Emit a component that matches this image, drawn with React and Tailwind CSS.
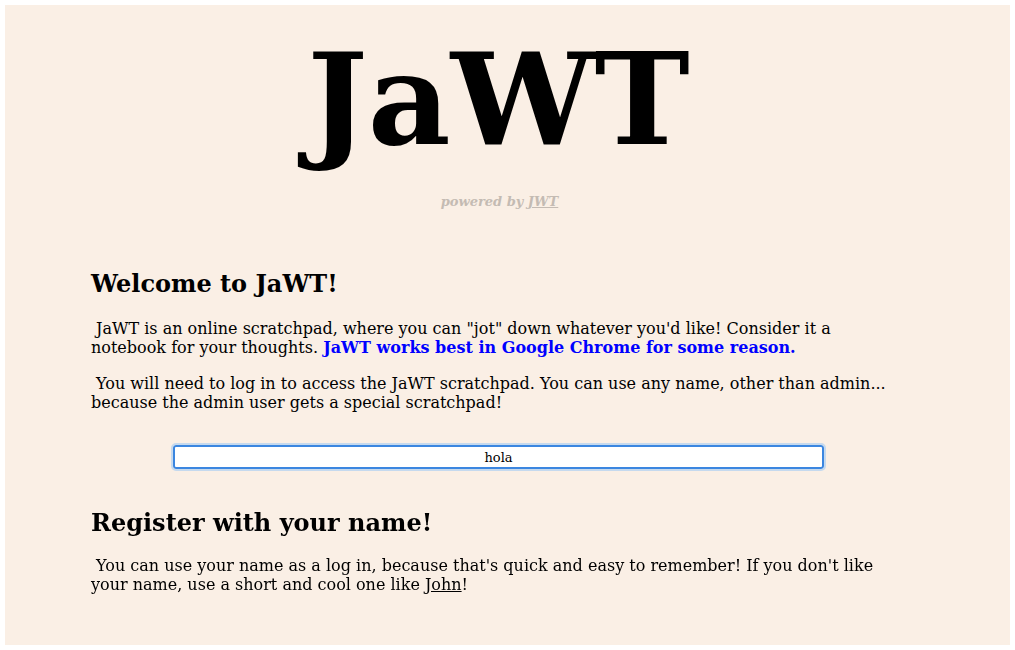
export default function App() {
  return (
    <div className="bg-white p-[5px] font-['DejaVu_Serif',serif] text-black">
      <div className="h-[640px] bg-[#faefe5] overflow-hidden">
        <div className="w-[1005px]">
          <h1 className="pt-[19px] pr-[18px] text-center text-[128px] font-bold leading-[normal]">JaWT</h1>
          <p className="mt-[20px] pr-[16px] text-center text-[13px] font-bold italic leading-[normal] text-[#c4bbb3]">
            powered by <span className="underline">JWT</span>
          </p>
          <div className="mt-[60px] ml-[86px] w-[804px]">
            <h2 className="text-[24px] font-bold leading-[normal]">Welcome to JaWT!</h2>
            <p className="mt-[21px] text-[16px] leading-[19px]">
              {'\u00a0'}JaWT is an online scratchpad, where you can "jot" down whatever you'd like! Consider it a notebook for your thoughts.{' '}
              <span className="font-bold text-[#0000ff]">JaWT works best in Google Chrome for some reason.</span>
            </p>
            <p className="mt-[17px] text-[16px] leading-[19px]">
              {'\u00a0'}You will need to log in to access the JaWT scratchpad. You can use any name, other than admin... because the admin user gets a special scratchpad!
            </p>
            <div className="mt-[33px] flex pl-[82px]">
              <input
                type="text"
                defaultValue="hola"
                autoFocus
                className="h-[24px] w-[651px] rounded-[3px] border-2 border-[#3b86e0] bg-white text-center text-[13px] text-black outline outline-[2px] outline-[#c5d9ee] font-['DejaVu_Serif',serif]"
              />
            </div>
            <h2 className="mt-[39px] text-[24px] font-bold leading-[normal]">Register with your name!</h2>
            <p className="mt-[19px] text-[16px] leading-[19px]">
              {'\u00a0'}You can use your name as a log in, because that's quick and easy to remember! If you don't like your name, use a short and cool one like <span className="underline">John</span>!
            </p>
          </div>
        </div>
      </div>
    </div>
  )
}
